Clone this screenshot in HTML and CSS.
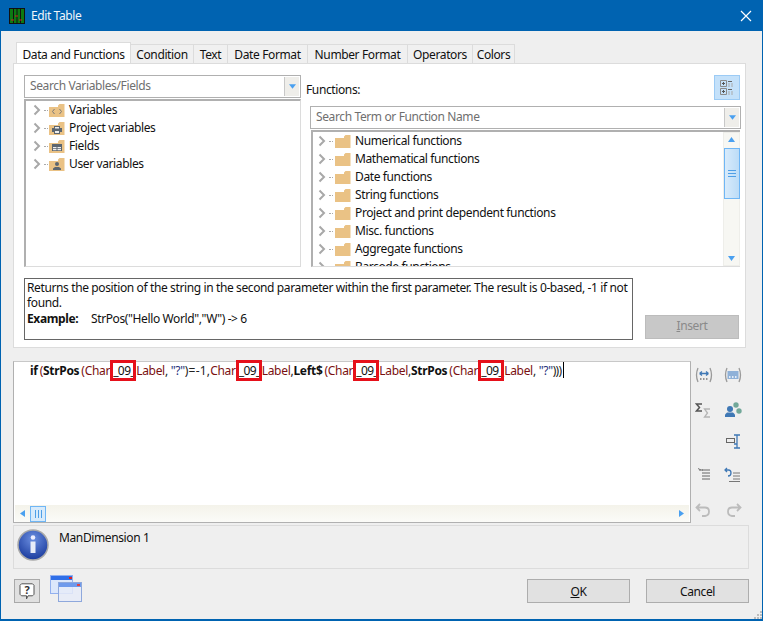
FILE: index.html
```html
<!DOCTYPE html>
<html lang="en">
<head>
<meta charset="utf-8">
<title>Edit Table</title>
<link rel="stylesheet" href="styles.css">
</head>
<body>
<svg class="defs" width="0" height="0" aria-hidden="true">
  <symbol id="chev" viewBox="0 0 8 12"><path d="M1.500 1.500 6 6 1.500 10.500" fill="none" stroke="#a8a8a8" stroke-width="2"/></symbol>
  <symbol id="folder" viewBox="0 0 16 13"><path d="M0 3h9V1.500L10.500 0H15.500V13H0Z" fill="#eac285"/></symbol>
</svg>
<div class="window">
  <header class="titlebar">
    <svg class="appicon" width="16" height="16" viewBox="0 0 16 16"><rect width="16" height="16" fill="#111"/><rect x="1" y="1" width="14" height="14" fill="#0c7a12"/><path d="M4.500 0v16M8 0v16M11.500 0v16" stroke="#111" stroke-width="1"/><path d="M2 12h3M6 8h3M10 12h3" stroke="#c22" stroke-width="1"/></svg>
    <span class="title">Edit Table</span>
    <svg class="close" width="12" height="12" viewBox="0 0 12 12"><path d="M1 1 11 11M11 1 1 11" stroke="#fff" stroke-width="1.200"/></svg>
  </header>
  <main class="body">
    <nav class="tabs">
      <span class="tab active">Data and Functions</span>
      <span class="tab t-cond">Condition</span>
      <span class="tab t-text">Text</span>
      <span class="tab t-date">Date Format</span>
      <span class="tab t-num">Number Format</span>
      <span class="tab t-op">Operators</span>
      <span class="tab t-col">Colors</span>
    </nav>
    <section class="panel">
      <div class="columns">
        <div class="left">
          <div class="search"><span class="placeholder">Search Variables/Fields</span><span class="drop"><svg width="7" height="5" viewBox="0 0 9 6"><path d="M0 0h9L4.500 6Z" fill="#4aa0f0"/></svg></span></div>
          <ul class="tree vars">
            <li><svg class="chev"><use href="#chev"/></svg><i class="dots"></i>
              <svg class="ficon" viewBox="0 0 16 13"><path d="M0 3h9V1.500L10.500 0H15.500V13H0Z" fill="#eac285"/><path d="M5.500 5 3.500 7.500 5.500 10M10.500 5 12.500 7.500 10.500 10" fill="none" stroke="#7a7a7a"/></svg>Variables</li>
            <li><svg class="chev"><use href="#chev"/></svg><i class="dots"></i>
              <svg class="ficon" viewBox="0 0 16 13"><path d="M0 3h9V1.500L10.500 0H15.500V13H0Z" fill="#eac285"/><path d="M5 4h6v2h2v4h-2v2H5v-2H3V6h2Z" fill="#5c6670"/><rect x="6" y="5" width="4" height="1.500" fill="#eee"/><rect x="6" y="9" width="4" height="2" fill="#eee"/></svg>Project variables</li>
            <li><svg class="chev"><use href="#chev"/></svg><i class="dots"></i>
              <svg class="ficon" viewBox="0 0 16 13"><path d="M0 3h9V1.500L10.500 0H15.500V13H0Z" fill="#eac285"/><rect x="3" y="4" width="10" height="7" fill="#5c6670"/><path d="M4 7h3.500v1.200H4zM8.500 7H12v1.200H8.500zM4 9h3.500v1.200H4zM8.500 9H12v1.200H8.500z" fill="#eee"/></svg>Fields</li>
            <li><svg class="chev"><use href="#chev"/></svg><i class="dots"></i>
              <svg class="ficon" viewBox="0 0 16 13"><path d="M0 3h9V1.500L10.500 0H15.500V13H0Z" fill="#eac285"/><circle cx="8" cy="6" r="2" fill="#5c6670"/><path d="M4 12V10.500L6 9h4l2 1.500V12Z" fill="#5c6670"/></svg>User variables</li>
          </ul>
        </div>
        <div class="right">
          <div class="fn-head">
            <span class="fn-label">Functions:</span>
            <span class="view-btn"><svg width="15" height="15" viewBox="0 0 15 15" fill="none"><path d="M.5 .5h6v6h-6zM.5 8.500h6v6h-6z" stroke="#8a8a8a"/><path d="M2 3.500h3M3.500 2v3M2 11.500h3M3.500 10v3" stroke="#555"/><path d="M8 1.500h4M8 9.500h4" stroke="#666"/><path d="M8 4h6M8 6h6M8 12h6M8 14h6" stroke="#aaa" stroke-dasharray="2 1"/></svg></span>
          </div>
          <div class="search fn-search"><span class="placeholder">Search Term or Function Name</span><span class="drop"><svg width="7" height="5" viewBox="0 0 9 6"><path d="M0 0h9L4.500 6Z" fill="#4aa0f0"/></svg></span></div>
          <div class="fn-tree">
            <ul class="tree funcs">
              <li><svg class="chev"><use href="#chev"/></svg><i class="dots"></i><svg class="ficon"><use href="#folder"/></svg>Numerical functions</li>
              <li><svg class="chev"><use href="#chev"/></svg><i class="dots"></i><svg class="ficon"><use href="#folder"/></svg>Mathematical functions</li>
              <li><svg class="chev"><use href="#chev"/></svg><i class="dots"></i><svg class="ficon"><use href="#folder"/></svg>Date functions</li>
              <li><svg class="chev"><use href="#chev"/></svg><i class="dots"></i><svg class="ficon"><use href="#folder"/></svg>String functions</li>
              <li><svg class="chev"><use href="#chev"/></svg><i class="dots"></i><svg class="ficon"><use href="#folder"/></svg>Project and print dependent functions</li>
              <li><svg class="chev"><use href="#chev"/></svg><i class="dots"></i><svg class="ficon"><use href="#folder"/></svg>Misc. functions</li>
              <li><svg class="chev"><use href="#chev"/></svg><i class="dots"></i><svg class="ficon"><use href="#folder"/></svg>Aggregate functions</li>
              <li><svg class="chev"><use href="#chev"/></svg><i class="dots"></i><svg class="ficon"><use href="#folder"/></svg>Barcode functions</li>
            </ul>
            <div class="vscroll">
              <svg class="arrow" width="7" height="5" viewBox="0 0 7 5"><path d="M0 5h7L3.500 0Z" fill="#4aa0f0"/></svg>
              <span class="vthumb"><i></i><i></i><i></i></span>
              <svg class="arrow" width="7" height="5" viewBox="0 0 7 5"><path d="M0 0h7L3.500 5Z" fill="#4aa0f0"/></svg>
            </div>
          </div>
        </div>
      </div>
      <div class="desc-row">
        <div class="desc">
          <p>Returns the position of the string in the second parameter within the first parameter. The result is 0-based, -1 if not found.</p>
          <p class="example"><b>Example:</b><span>StrPos("Hello World","W") -&gt; 6</span></p>
        </div>
        <button class="insert" type="button"><u>I</u>nsert</button>
      </div>
    </section>
    <section class="editor-row">
      <div class="editor">
        <div class="code"><b>if</b><span class="gap">(</span><b>StrPos</b><span class="gap">(</span><span class="v">Char<mark>_09_</mark>Label</span>, <span class="str">"?"</span><span class="op">)=-1,</span><span class="v">Char<mark>_09_</mark>Label</span>,<b>Left$</b><span class="gap">(</span><span class="v">Char<mark>_09_</mark>Label</span>,<b>StrPos</b><span class="gap">(</span><span class="v">Char<mark>_09_</mark>Label</span>, <span class="str">"?"</span><span class="close-parens">)))</span><i class="caret"></i></div>
        <div class="hscroll">
          <svg width="5" height="7" viewBox="0 0 5 7"><path d="M5 0v7L0 3.500Z" fill="#4aa0f0"/></svg>
          <span class="hthumb"><i></i><i></i><i></i></span>
          <svg class="hright" width="5" height="7" viewBox="0 0 5 7"><path d="M0 0v7L5 3.500Z" fill="#4aa0f0"/></svg>
        </div>
      </div>
      <aside class="tools">
        <svg viewBox="0 0 18 16" fill="none"><path d="M3 1Q0 8 3 15M15 1Q18 8 15 15" stroke="#9a9a9a" stroke-width="1.300"/><path d="M4.500 6.500h9M4.500 6.500 7 4.500M4.500 6.500 7 8.500M13.500 6.500 11 4.500M13.500 6.500 11 8.500" stroke="#3f78b5" stroke-width="1.300"/><path d="M5 12h8" stroke="#777" stroke-dasharray="1.500 1.500" stroke-width="1.500"/></svg>
        <svg viewBox="0 0 18 16" fill="none"><path d="M3 1Q0 8 3 15M15 1Q18 8 15 15" stroke="#9a9a9a" stroke-width="1.300"/><rect x="3.500" y="4" width="11" height="8" fill="#8fb1d8"/><path d="M5 10h8" stroke="#fff" stroke-dasharray="1.500 1.500" stroke-width="1.500"/></svg>
        <svg viewBox="0 0 18 16" fill="none"><path d="M7 2H1.500L4.500 5.500 1.500 9H7" stroke="#555" stroke-width="1.500"/><path d="M15 7H9.500L12.500 11 9.500 15H15" stroke="#b5b5b5" stroke-width="1.300"/></svg>
        <svg viewBox="0 0 18 16"><circle cx="6" cy="7" r="3" fill="#3f78b5"/><path d="M1 15V12.500L3 10.500H9L11 12.500V15Z" fill="#3f78b5"/><circle cx="12" cy="3" r="2.700" fill="#72a899"/><circle cx="15" cy="9" r="2.700" fill="#72a899"/></svg>
        <span></span>
        <svg viewBox="0 0 18 16" fill="none"><rect x="2.500" y="4.500" width="8" height="4" stroke="#666" fill="#eee"/><path d="M10 1h6M13 1v13M10 14h6M10 10h3" stroke="#3f78b5" stroke-width="1.300"/></svg>
        <svg viewBox="0 0 18 16" fill="none"><path d="M4 3h4M7 6h8M7 3h8M7 9h8M7 12h8" stroke="#666"/><path d="M3 1.500 6 3" stroke="#777"/></svg>
        <svg viewBox="0 0 18 16" fill="none"><path d="M3 1 1 3l2 2M1 3h3.500Q7 3 7 6T4 9" stroke="#3f78b5" stroke-width="1.300"/><path d="M9 6h7M9 9h7M9 12h7M5 14.500h11" stroke="#777"/></svg>
        <svg viewBox="0 0 18 16" fill="none"><path d="M5 2 1.500 5.500 5 9M1.500 5.500H10Q14 5.500 14 9.500T10 14H7" stroke="#bcbcbc" stroke-width="1.800"/></svg>
        <svg viewBox="0 0 18 16" fill="none"><path d="M13 2 16.500 5.500 13 9M16.500 5.500H8Q4 5.500 4 9.500T8 14H11" stroke="#bcbcbc" stroke-width="1.800"/></svg>
      </aside>
    </section>
    <section class="info">
      <svg class="info-icon" width="32" height="32" viewBox="0 0 32 32"><defs><radialGradient id="ig" cx=".5" cy=".3" r=".8"><stop offset="0" stop-color="#6c8fe0"/><stop offset="1" stop-color="#0f2f94"/></radialGradient></defs><circle cx="16" cy="16" r="15" fill="url(#ig)" stroke="#a9a9a9" stroke-width="1.500"/><circle cx="16" cy="8.500" r="2.300" fill="#eef"/><path d="M13.500 12.500h5V24h-5Z" fill="#e8ecf8"/></svg>
      <span class="info-text">ManDimension 1</span>
    </section>
    <footer class="footer">
      <div class="foot-left">
        <span class="help"><svg width="16" height="17" viewBox="0 0 16 17" fill="none"><path d="M2.500 .8h11l1.500 1.500v9l-1.500 1.500H9L7.500 16V12.800H2.500L1 11.300v-9Z" fill="#fff" stroke="#555"/><text x="8" y="10.500" text-anchor="middle" class="q">?</text></svg></span>
        <svg class="windows" width="33" height="31" viewBox="0 0 33 31"><rect x=".5" y=".5" width="22" height="18" fill="#dce7fb" stroke="#92b0ef"/><rect x="1" y="1" width="21" height="4" fill="#2f6fe8"/><rect x="19" y="2" width="3" height="2" fill="#d22"/><rect x="8.500" y="7.500" width="23" height="19" fill="#e6ebf8" fill-opacity=".85" stroke="#8ea8dc"/><rect x="9" y="8" width="22" height="4" fill="#6f9aec"/><rect x="27" y="9" width="3" height="2" fill="#d44"/></svg>
      </div>
      <div class="foot-right">
        <button class="btn" type="button"><u>O</u>K</button>
        <button class="btn" type="button">Cancel</button>
      </div>
    </footer>
    <svg class="grip" width="8" height="8" viewBox="0 0 8 8"><path d="M6 0h2v2H6zM3 3h2v2H3zM6 3h2v2H6zM0 6h2v2H0zM3 6h2v2H3zM6 6h2v2H6z" fill="#bdbdbd"/></svg>
  </main>
</div>
</body>
</html>
```
FILE: styles.css
```css
* { box-sizing: border-box; }
html, body { margin: 0; padding: 0; }
body { width: 763px; height: 621px; overflow: hidden; font-family: "Noto Sans", "Open Sans", sans-serif; font-size: 12px; letter-spacing: -0.38px; color: #111; }
.defs { position: absolute; }
ul { list-style: none; margin: 0; padding: 0; }
p { margin: 0; }
button { font: inherit; letter-spacing: inherit; }

.window { width: 763px; height: 621px; display: flex; flex-direction: column; background: #efefef; border: 1px solid #0063b1; border-width: 0 1px 2px 1px; }
.titlebar { height: 31px; flex: none; background: #0063b1; display: flex; align-items: center; padding: 0 10px 0 8px; color: #fff; }
.appicon { flex: none; }
.title { margin-left: 6px; flex: 1; color: #f0f6fb; letter-spacing: -0.4px; }
.body { position: relative; flex: 1; display: flex; flex-direction: column; padding: 13px 14px 0 12px; min-height: 0; }

.tabs { display: flex; height: 19px; padding-left: 3px; position: relative; z-index: 1; }
.tab { height: 19px; padding: 1px 0 0; text-align: center; background: #f0f0f0; border: 1px solid #dcdcdc; border-bottom: 0; margin-left: -1px; line-height: 18px; white-space: nowrap; }
.tab.active { height: 21px; margin: -2px 0 0 0; background: #fff; width: 115px; padding: 3px 0 0 0; line-height: 18px; }
.t-cond { width: 64px; } .t-text { width: 35px; } .t-date { width: 81px; }
.t-num { width: 101px; } .t-op { width: 66px; } .t-col { width: 43px; }

.panel { width: 733px; height: 285px; flex: none; background: #fff; border: 1px solid #dcdcdc; padding: 11px 5px 0 10px; }
.columns { display: flex; height: 192px; }
.left { width: 277px; flex: none; display: flex; flex-direction: column; }
.right { flex: 1; margin-left: 5px; display: flex; flex-direction: column; min-width: 0; }

.search { height: 23px; border: 1px solid #b0b0b0; display: flex; align-items: stretch; background: #fff; flex: none; }
.placeholder { flex: 1; padding-left: 5px; line-height: 20px; color: #6f6f6f; }
.drop { width: 15px; background: #efeeea; border-left: 1px solid #c8c8c8; display: flex; align-items: center; justify-content: center; margin: 1px; }
.drop svg { display: block; }

.tree li { height: 18px; padding-bottom: 2px; display: flex; align-items: center; white-space: nowrap; }
.chev { width: 8px; height: 12px; flex: none; margin: 2px 0 0 7px; }
.dots { width: 4px; flex: none; margin: 2px 1px 0 3px; border-top: 1px dotted #aaa; }
.ficon { width: 16px; height: 13px; flex: none; margin: 2px 4px 0 0; }

.vars { margin-top: 1px; flex: 1; border: 1px solid #dcdcdc; border-left: 2px solid #b0b0b0; border-top: 2px solid #b0b0b0; }

.fn-head { height: 31px; display: flex; justify-content: space-between; flex: none; }
.fn-label { line-height: 28px; padding-top: 1px; }
.view-btn { width: 26px; height: 25px; background: #c4e1fa; border: 1px solid #9ccbf5; display: flex; align-items: center; justify-content: center; }
.fn-search { margin-left: 4px; margin-right: -1px; }
.fn-tree { margin-left: 5px; margin-top: 1px; flex: 1; display: flex; overflow: hidden; border-top: 2px solid #b0b0b0; border-left: 2px solid #b0b0b0; border-bottom: 1px solid #dcdcdc; min-height: 0; }
.funcs { flex: 1; overflow: hidden; }
.funcs .chev { margin-left: 5px; }
.funcs .dots { margin-right: 2px; }
.vscroll { width: 17px; flex: none; background: #f7f7f3; border: 1px solid #eeeeea; display: flex; flex-direction: column; align-items: center; }
.arrow { display: block; margin: 4px 0; flex: none; }
.vthumb { width: 16px; height: 51px; margin-top: 2px; margin-bottom: auto; background: linear-gradient(90deg, #d8ebfb, #bcdcf7); border: 1px solid #6fb6f5; display: flex; flex-direction: column; justify-content: center; align-items: center; gap: 2px; }
.vthumb i { width: 8px; height: 1px; background: #4f9fe6; display: block; }

.desc-row { display: flex; margin-top: 11px; align-items: flex-end; }
.desc { width: 609px; height: 62px; border: 1px solid #666; padding: 1px 2px; line-height: 15px; flex: none; }
.example { display: flex; margin-top: 1px; }
.example b { width: 64px; }
.insert { width: 94px; height: 24px; margin: 0 0 1px 12px; background: #c8c8c8; border: 1px solid #bcbcbc; color: #8a8a8a; padding: 0 0 2px; line-height: 18px; }

.editor-row { display: flex; margin-top: 13px; height: 162px; flex: none; }
.editor { width: 678px; height: 162px; background: #fff; border: 1px solid #b0b0b0; border-top-color: #c8c8c8; display: flex; flex-direction: column; }
.code { flex: 1; padding: 0 0 0 16px; white-space: nowrap; line-height: 15px; color: #222; letter-spacing: -0.3px; }
.code b { color: #111; }
.gap { margin-left: 2px; color: #7a1010; }
.v { color: #7a1010; }
.str { color: #23327a; }
.op { letter-spacing: 0.2px; }
.close-parens { letter-spacing: -0.8px; }
mark { display: inline-block; width: 20px; height: 15px; line-height: 15px; vertical-align: baseline; background: none; color: #111; outline: 3px solid #e6101a; margin: 0 3px; white-space: nowrap; letter-spacing: -0.6px; }
.caret { display: inline-block; width: 1px; height: 16px; background: #000; vertical-align: -3px; margin-left: 2px; }
.hscroll { height: 17px; flex: none; background: linear-gradient(#f4f3ea, #fbfbf8); margin: 0 1px; display: flex; align-items: center; padding: 0 5px; }
.hright { margin-left: auto; }
.hthumb { width: 16px; height: 16px; margin-left: 5px; background: #d8ebfb; border: 1px solid #6fb6f5; display: flex; align-items: center; justify-content: center; gap: 2px; }
.hthumb i { width: 1px; height: 8px; background: #4f9fe6; display: block; }

.tools { flex: none; display: grid; grid-template-columns: 18px 18px; grid-template-rows: 35px 32px 33px 35px 16px; column-gap: 11px; padding: 6px 0 0 4px; }
.tools svg { width: 18px; height: 16px; display: block; }

.info { width: 736px; height: 44px; margin-top: 2px; flex: none; border: 1px solid #dcdcdc; display: flex; padding: 3px 0 0 3px; }
.info-icon { flex: none; }
.info-text { margin-left: 10px; line-height: 15px; padding-top: 1px; }

.footer { display: flex; justify-content: space-between; margin-top: 9px; width: 736px; }
.foot-left { display: flex; align-items: flex-start; }
.help { width: 26px; height: 24px; margin-left: 1px; margin-top: 1px; background: #e0e0e0; border: 1px solid #a9a9a9; display: flex; align-items: center; justify-content: center; }
.q { font-size: 11px; font-weight: 700; fill: #333; }
.windows { margin: -3px 0 0 10px; }
.foot-right { display: flex; gap: 16px; }
.btn { width: 103px; height: 24px; margin-top: 1px; background: #e1e1e1; border: 1px solid #adadad; padding: 0; color: #111; }
.close { flex: none; }
.grip { position: absolute; right: 0; bottom: 0; }
```
